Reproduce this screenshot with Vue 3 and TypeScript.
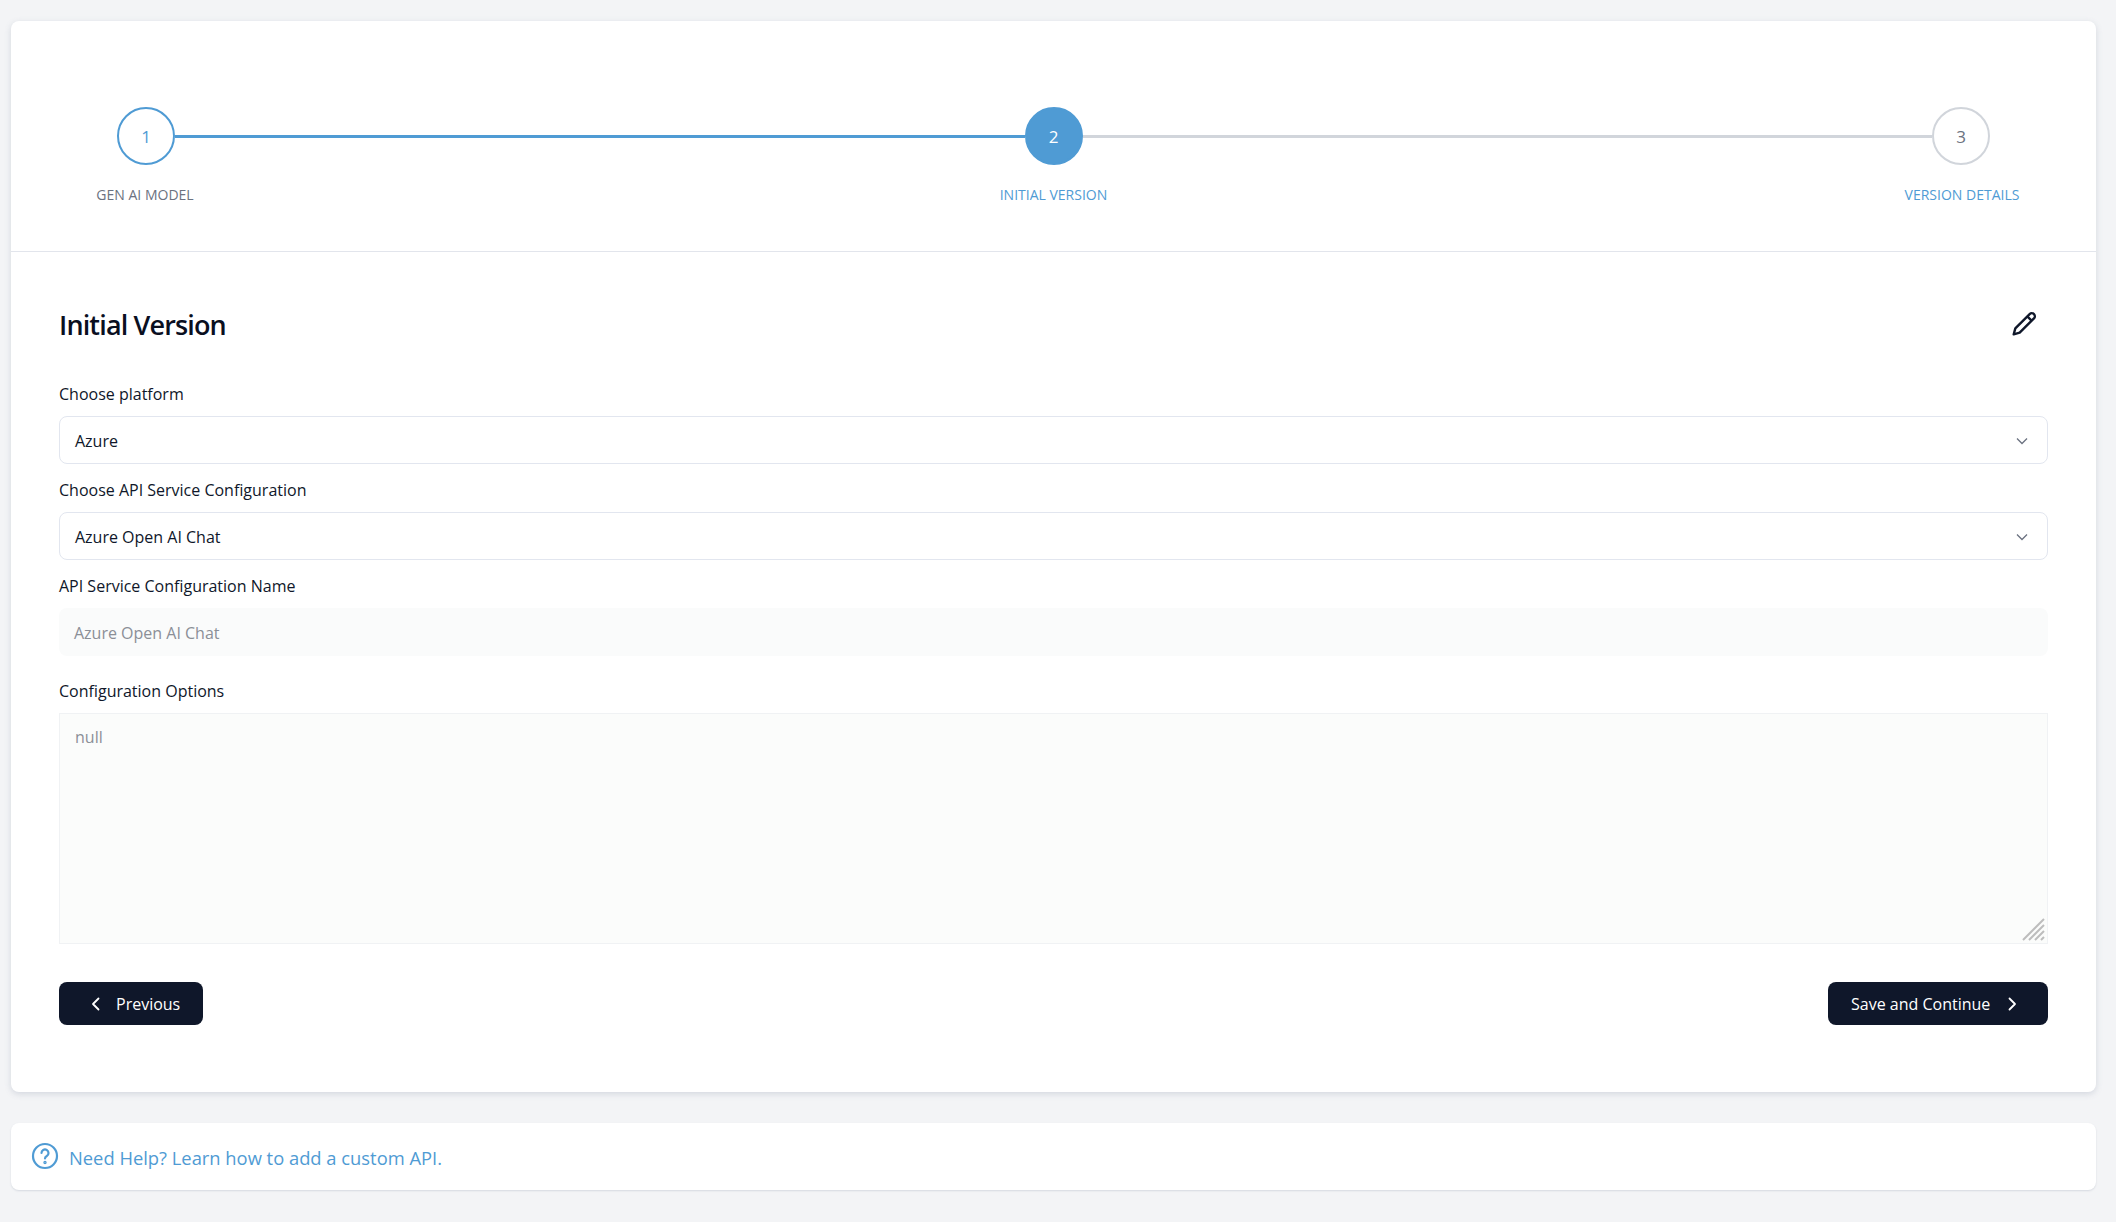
<script setup lang="ts">
const steps = [
  { n: 1, label: 'GEN AI MODEL', state: 'done' },
  { n: 2, label: 'INITIAL VERSION', state: 'active' },
  { n: 3, label: 'VERSION DETAILS', state: 'todo' },
]
</script>

<template>
  <div class="page">
    <main class="card">
      <section class="stepper">
        <div class="track">
          <template v-for="(s, i) in steps" :key="s.n">
            <div class="circle" :class="s.state">{{ s.n }}</div>
            <div v-if="i < 2" class="line" :class="{ on: i === 0 }"></div>
          </template>
        </div>
        <div class="labels">
          <span v-for="s in steps" :key="s.n" class="label" :class="s.state">{{ s.label }}</span>
        </div>
      </section>
      <section class="body">
        <div class="head">
          <h1>Initial Version</h1>
          <svg class="pencil" width="26" height="26" viewBox="0 0 24 24" fill="none" stroke="#0f172a" stroke-width="2.200" stroke-linecap="round" stroke-linejoin="round">
            <path d="M21.200 6.800a2.800 2.800 0 0 0-4-4L4 16l-1.500 5.500L8 20 21.200 6.800Z" />
            <path d="M15.500 5.500l3 3" />
          </svg>
        </div>
        <label class="lab">Choose platform</label>
        <div class="select">
          <span>Azure</span>
          <svg width="16" height="16" viewBox="0 0 16 16" fill="none" stroke="#6b7280" stroke-width="1.300"><path d="M3 5.500l5 5 5-5" /></svg>
        </div>
        <label class="lab">Choose API Service Configuration</label>
        <div class="select">
          <span>Azure Open AI Chat</span>
          <svg width="16" height="16" viewBox="0 0 16 16" fill="none" stroke="#6b7280" stroke-width="1.300"><path d="M3 5.500l5 5 5-5" /></svg>
        </div>
        <label class="lab">API Service Configuration Name</label>
        <div class="input">Azure Open AI Chat</div>
        <label class="lab opts">Configuration Options</label>
        <div class="area">
          null
          <svg class="grip" width="24" height="24" viewBox="0 0 24 24" stroke="#bdbdbd" stroke-width="2" fill="none">
            <path d="M1 22 L22 1 M7 22 L22 7 M13 22 L22 13 M19 22 L22 19" />
          </svg>
        </div>
        <div class="actions">
          <button class="btn prev">
            <svg width="16" height="16" viewBox="0 0 16 16" fill="none" stroke="#fff" stroke-width="1.800" stroke-linecap="round" stroke-linejoin="round"><path d="M10.500 2.500 5 8l5.500 5.500" /></svg>
            Previous
          </button>
          <button class="btn next">
            Save and Continue
            <svg width="16" height="16" viewBox="0 0 16 16" fill="none" stroke="#fff" stroke-width="1.800" stroke-linecap="round" stroke-linejoin="round"><path d="M5.500 2.500 11 8l-5.500 5.500" /></svg>
          </button>
        </div>
      </section>
    </main>
    <footer class="help">
      <svg class="help-icon" width="28" height="28" viewBox="0 0 28 28" fill="none" stroke="#4f9bd4" stroke-width="2.200" stroke-linecap="round">
        <circle cx="14" cy="14" r="12" />
        <path d="M10.500 11a3.500 3.500 0 1 1 5.300 3c-1.200.7-1.800 1.400-1.800 2.500" />
        <circle cx="14" cy="20.500" r=".6" fill="#4f9bd4" />
      </svg>
      <span class="help-text">Need Help? Learn how to add a custom API.</span>
    </footer>
  </div>
</template>

<style>
html, body { margin: 0; background: #f3f4f6; }
</style>

<style scoped>
.page {
  box-sizing: border-box;
  height: 1222px;
  padding: 21px 20px 0 11px;
  background: #f3f4f6;
  font-family: "Open Sans", "Noto Sans", sans-serif;
  color: #0f172a;
}
.card {
  height: 1071px;
  box-sizing: border-box;
  background: #fff;
  border-radius: 8px;
  box-shadow: 0 2px 6px rgba(100, 116, 139, .22);
}
.stepper {
  box-sizing: border-box;
  height: 231px;
  padding-top: 86px;
  border-bottom: 1px solid #e2e5ec;
}
.track {
  display: flex;
  align-items: center;
  padding: 0 106px;
}
.circle {
  box-sizing: border-box;
  width: 58px;
  height: 58px;
  flex: none;
  border-radius: 50%;
  display: flex;
  align-items: center;
  justify-content: center;
  font-size: 17px;
  border: 2px solid #d1d5db;
  color: #6b7280;
}
.circle.done { border-color: #4f9bd4; color: #4f9bd4; }
.circle.active { background: #4f9bd4; border-color: #4f9bd4; color: #fff; }
.line { flex: 1; height: 3px; background: #d1d5db; }
.line.on { background: #4f9bd4; }
.labels {
  display: flex;
  justify-content: space-between;
  padding: 20px 44px 0;
}
.label {
  width: 180px;
  text-align: center;
  font-size: 14px;
  line-height: 20px;
  color: #4f9bd4;
}
.label.done { color: #6b7280; }
.body { padding: 52px 48px 0; }
.head {
  display: flex;
  justify-content: space-between;
  align-items: center;
  height: 40px;
  margin-bottom: 38px;
}
h1 { margin: 0; font-size: 27px; font-weight: 600; letter-spacing: -.85px; color: #0a0f1f; }
.pencil { margin-right: 11px; }
.lab {
  display: block;
  font-size: 16px;
  line-height: 24px;
  margin-bottom: 10px;
}
.opts { margin-top: 23px; }
.select, .input {
  box-sizing: border-box;
  height: 48px;
  border-radius: 8px;
  display: flex;
  align-items: center;
  font-size: 16px;
}
.select {
  justify-content: space-between;
  border: 1px solid #e2e6ef;
  padding: 1px 17px 0 15px;
  margin-bottom: 14px;
}
.input { background: #fafbfb; color: #8b8f97; padding: 1px 15px 0; }
.area {
  position: relative;
  box-sizing: border-box;
  height: 231px;
  background: #fbfcfb;
  border: 1px solid #f0f2f4;
  padding: 11px 15px;
  font-size: 16px;
  line-height: 24px;
  color: #8b8f97;
}
.grip { position: absolute; right: 1px; bottom: 1px; }
.actions {
  display: flex;
  justify-content: space-between;
  margin-top: 38px;
}
.btn {
  height: 43px;
  box-sizing: border-box;
  border: 0;
  border-radius: 8px;
  background: #0f172a;
  color: #fff;
  font: inherit;
  font-size: 16px;
  display: flex;
  align-items: center;
}
.prev { width: 144px; padding: 0 0 0 29px; gap: 12px; }
.next { width: 220px; padding: 0 0 0 23px; gap: 14px; }
.help {
  box-sizing: border-box;
  height: 67px;
  margin-top: 31px;
  background: #fff;
  border-radius: 8px;
  box-shadow: 0 1px 2px rgba(100, 116, 139, .2);
  display: flex;
  align-items: center;
  padding: 0 20px;
  gap: 10px;
  font-size: 18.350px;
  color: #4f9bd4;
}
.help-icon { margin-bottom: 2px; }
.help-text { margin-top: 1px; }
</style>
